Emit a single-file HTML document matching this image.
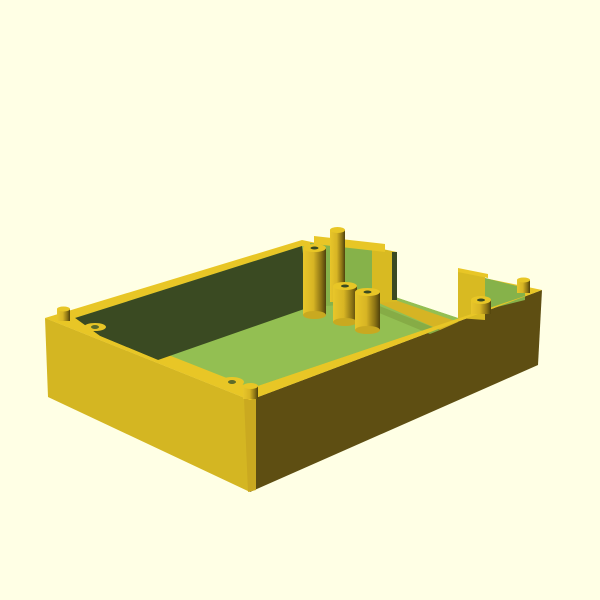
<!DOCTYPE html>
<html><head><style>html,body{margin:0;padding:0;background:#ffffe5;}svg{display:block}</style></head>
<body>
<svg width="600" height="600" viewBox="0 0 600 600" xmlns="http://www.w3.org/2000/svg">
<defs>
<linearGradient id="cyl" x1="0" x2="1" y1="0" y2="0">
<stop offset="0" stop-color="#e8c62a"/><stop offset="0.45" stop-color="#d8b524"/><stop offset="0.8" stop-color="#8a7214"/><stop offset="1" stop-color="#4e410c"/>
</linearGradient>
</defs>
<rect width="600" height="600" fill="#ffffe5"/>
<polygon points="250,400 542,290 538,365 250,492" fill="#5e4e12"/>
<polygon points="45,318 250,400 250,492 48,397" fill="#d4b622"/>
<polygon points="244,398 256,398 256,490 248,492" fill="#caa920"/>
<polygon points="45,318 302,240 542,290 250,400" fill="#e8c626"/>
<polygon points="75,318 302,246 522,297 252,388" fill="#93bf52"/>
<polygon points="395,230 458,230 458,318 395,297" fill="#ffffe5"/>
<polygon points="395,297 458,318 458,322 390,300" fill="#93bf52"/>
<polygon points="372,300 395,300 458,322 440,330" fill="#d6b424"/>
<polygon points="372,303 440,330 430,334 372,310" fill="#86ac46"/>
<polygon points="75,318 302,246 310,307 158,360 100,336" fill="#3a4a22"/>
<polygon points="310,243 372,248 372,303 310,307" fill="#86b24a"/>
<polygon points="372,247 397,252 397,302 372,303" fill="#d8ba22"/>
<polygon points="314,236 385,244 385,252 314,244" fill="#e8c626"/>
<polygon points="392,252 397,252 397,300 392,300" fill="#3a4a22"/>
<polygon points="458,270 485,276 485,320 458,318" fill="#d8ba22"/>
<polygon points="485,278 525,288 525,300 485,310" fill="#86b24a"/>
<polygon points="458,268 488,274 488,278 458,272" fill="#e8c626"/>
<polygon points="45,318 75,318 100,336 158,360 252,388 522,297 542,290 250,400" fill="#e8c626"/>
<rect x="303" y="248" width="23" height="67" fill="url(#cyl)"/>
<ellipse cx="314.5" cy="315" rx="11.5" ry="4" fill="#c9a920"/>
<ellipse cx="314.5" cy="248" rx="11.5" ry="4" fill="#e8c626"/>
<ellipse cx="314.5" cy="248" rx="4" ry="1.5" fill="#3a4a22"/>
<rect x="330" y="230" width="15" height="72" fill="url(#cyl)"/>
<ellipse cx="337.5" cy="230" rx="7.5" ry="3" fill="#e8c626"/>
<rect x="333" y="286" width="24" height="36" fill="url(#cyl)"/>
<ellipse cx="345" cy="322" rx="12" ry="4" fill="#c9a920"/>
<ellipse cx="345" cy="286" rx="12" ry="4" fill="#e8c626"/>
<ellipse cx="345" cy="286" rx="4" ry="1.5" fill="#3a4a22"/>
<rect x="355" y="292" width="25" height="38" fill="url(#cyl)"/>
<ellipse cx="367.5" cy="330" rx="12.5" ry="4" fill="#c9a920"/>
<ellipse cx="367.5" cy="292" rx="12.5" ry="4" fill="#e8c626"/>
<ellipse cx="367.5" cy="292" rx="4" ry="1.5" fill="#3a4a22"/>
<rect x="57" y="309" width="13" height="12" fill="url(#cyl)"/>
<ellipse cx="63.5" cy="309" rx="6.5" ry="2.5" fill="#e8c626"/>
<ellipse cx="95" cy="327" rx="11" ry="4" fill="#e8c626"/>
<ellipse cx="95" cy="327" rx="4" ry="2" fill="#5c6b2a"/>
<ellipse cx="232" cy="382" rx="12" ry="5" fill="#e8c626"/>
<ellipse cx="232" cy="382" rx="4" ry="2" fill="#5c6b2a"/>
<rect x="243" y="386" width="15" height="13" fill="url(#cyl)"/>
<ellipse cx="250.5" cy="386" rx="7.5" ry="3" fill="#e8c626"/>
<rect x="471" y="300" width="20" height="14" fill="url(#cyl)"/>
<ellipse cx="481" cy="300" rx="10" ry="4" fill="#e8c626"/>
<ellipse cx="481" cy="300" rx="4" ry="1.5" fill="#3a4a22"/>
<rect x="517" y="280" width="13" height="13" fill="url(#cyl)"/>
<ellipse cx="523.5" cy="280" rx="6.5" ry="2.5" fill="#e8c626"/>
</svg>
</body></html>
